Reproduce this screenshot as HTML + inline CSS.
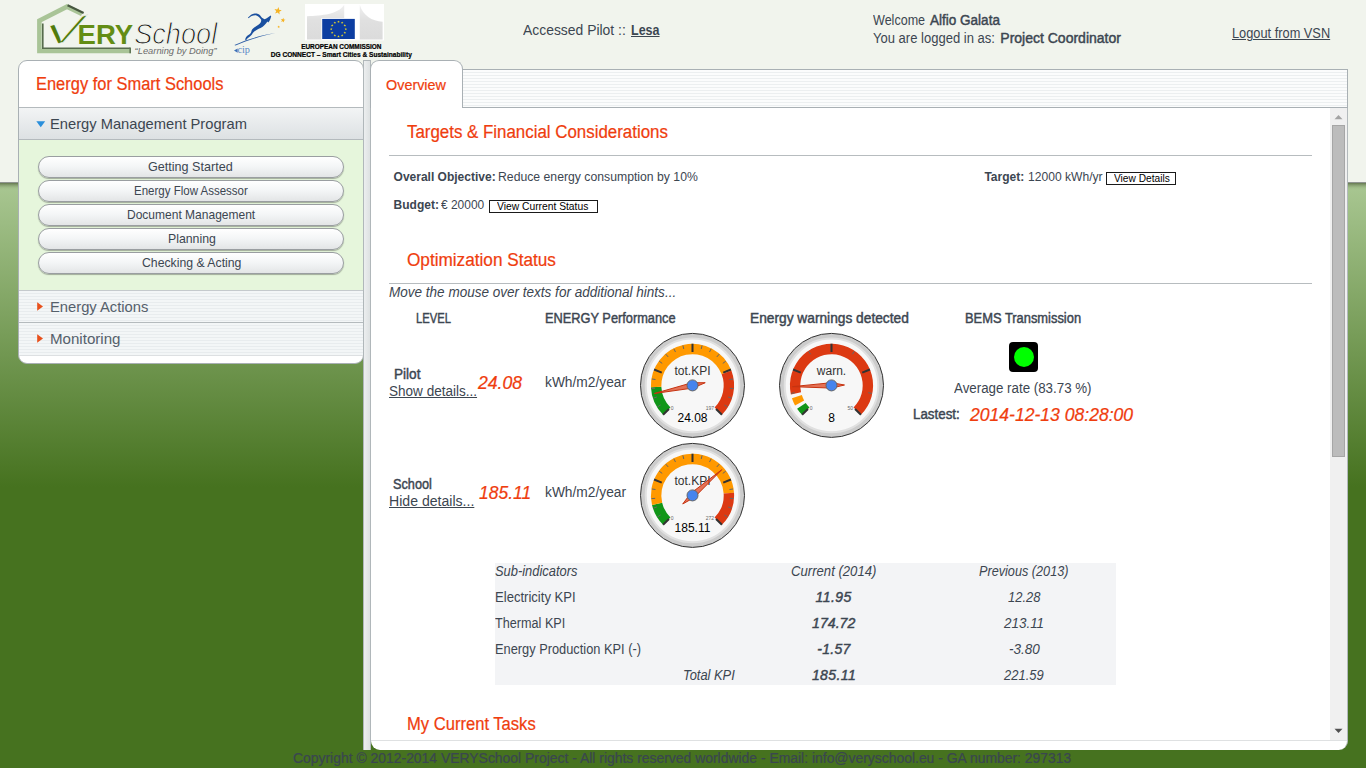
<!DOCTYPE html>
<html lang="en">
<head>
<meta charset="utf-8">
<title>VERYSchool Navigator - Energy for Smart Schools</title>
<style>
html,body{margin:0;padding:0;}
body{width:1366px;height:768px;overflow:hidden;position:relative;background:#46721f;
 font-family:"Liberation Sans","DejaVu Sans",sans-serif;font-size:13px;color:#3c4651;}
div,span,a,b,svg,button,h1,h2,h3,td,th{position:absolute;box-sizing:border-box;margin:0;padding:0;}
.t{white-space:nowrap;line-height:0;transform-origin:0 0;font-weight:normal;text-decoration:none;}
#bg{left:0;top:183px;width:1366px;height:304px;background:linear-gradient(to bottom,rgba(60,72,40,.62) 0,rgba(60,72,40,.46) 1px,rgba(60,72,40,.33) 2px,rgba(60,72,40,.21) 3px,rgba(60,72,40,.12) 4px,rgba(60,72,40,.05) 5px,rgba(60,72,40,0) 7px),linear-gradient(to bottom,#a9c792 0%,#46721f 100%);}
#top{left:0;top:0;width:1366px;height:183px;background:#f1f4ed;border-bottom:1px solid #8f9490;}
#left{left:18px;top:60px;width:346px;height:304px;border:1px solid #a9b0b4;border-radius:9px;background:#fff;overflow:hidden;}
.stripe{background:repeating-linear-gradient(to bottom,#f3f6f7 0,#f3f6f7 2px,#e8ecee 2px,#e8ecee 3px);}
#tabbar.stripe{background:repeating-linear-gradient(to bottom,#fbfcfc 0,#fbfcfc 2px,#eceff0 2px,#eceff0 3px);}
.row{left:0;width:344px;border-top:1px solid #b4babd;}
.btn{left:38px;width:306px;height:22px;border:1px solid #9a9ea1;border-radius:11px;
 background:linear-gradient(to bottom,#ffffff 0%,#f3f5f6 50%,#e3e5e6 100%);box-shadow:0 1px 1px rgba(0,0,0,.3);}
#split{left:363px;top:60px;width:8px;height:690px;background:linear-gradient(to right,#eceeef,#dde1e2);border:1px solid #b0b7ba;border-bottom:none;}
#tab{left:370px;top:60px;width:93px;height:48px;background:#fff;border:1px solid #a9b0b4;border-bottom:none;border-radius:9px 9px 0 0;}
#tabbar{left:462px;top:69px;width:886px;height:39px;border:1px solid #a9b0b4;border-left:none;}
#content{left:371px;top:108px;width:977px;height:642px;background:#fff;border-right:1px solid #b3b9bc;border-radius:0 0 9px 9px;}
.hr{left:389px;width:923px;height:1px;background:#b7bcbf;}
.sbtn{height:13px;background:#fff;border:1px solid #1a1a1a;}
#tbl{left:495px;top:563px;width:621px;height:122px;background:#f3f4f6;}
.gauge{overflow:visible;font-family:"Liberation Sans","DejaVu Sans",sans-serif;}
</style>
</head>
<body>
<div id="bg"></div>
<div id="top"></div>
<svg id="logo" style="left:0;top:0" width="430" height="62" viewBox="0 0 430 62" font-family="'Liberation Sans','DejaVu Sans',sans-serif">
<g fill="none" stroke-linejoin="miter">
<path d="M131,51 L39.4,51 L39.4,20.6 L67,6.6 L82,14" stroke="#a9c497" stroke-width="4.6"/>
<path d="M130,48.3 L42.8,48.3 L42.8,23.5" stroke="#566b4c" stroke-width="1.6"/>
<path d="M67.6,5.2 L83.6,13" stroke="#47573f" stroke-width="2.2"/>
<path d="M130.2,47.6 L130.2,53.2" stroke="#5f7554" stroke-width="1.6"/>
</g>
<text x="0" y="0" font-size="27" fill="#4f7a0c" stroke="#f1f4ed" stroke-width="0.65" transform="matrix(2.189,-0.639,-0.441,1.223,40.8,48.75)">V</text>
<text x="77.6" y="43.7" font-size="28" font-weight="bold" fill="#638d14" textLength="55.6" lengthAdjust="spacingAndGlyphs">ERY</text>
<text x="134.2" y="43.8" font-size="29.5" font-style="italic" fill="#111111" stroke="#f1f4ed" stroke-width="1.1" textLength="83" lengthAdjust="spacingAndGlyphs">School</text>
<text x="134.6" y="54.4" font-size="9" font-style="italic" fill="#6b6b6b" textLength="82" lengthAdjust="spacingAndGlyphs">“Learning by Doing”</text>
<g fill="#1a4f9f">
<path d="M248,17.6 C250,15.6 252,13.6 254.6,13.5 C257,13.4 259,13.9 260,15.2 C261.2,17 262.6,18.6 264.6,19.2 C267,18.4 268.8,16.8 270.6,15.4 L271.2,16.2 C270.6,18.6 269.8,21 268.2,22.4 L267.4,21.4 C266,23.6 263.6,26.6 260.6,28 C257.4,29.4 254.6,30.8 252.8,33 C251.6,35 250.6,36.4 248.6,37.4 C247.2,38.2 246.4,39.2 246.2,40.6 L245.2,40 C245.2,37.8 246.6,36 248.8,34.8 C250.6,33.8 251.4,32.6 251.6,30.6 C252.6,28.4 255.6,26.6 258.4,24.8 C260.4,23.4 261.4,21.6 261.2,19.8 C260,18 258.6,16.2 256.4,15.4 C253.4,15 250.6,16.4 248.6,18.2 Z"/>
<path d="M234.4,45 C246,39.6 260,35.4 275.4,33 C261,36 247.4,40.6 235.6,45.6 Z" opacity="0.9"/>
</g>
<path d="M278.58,7.06L279.08,9.76L281.76,10.36L279.35,11.67L279.61,14.41L277.62,12.51L275.09,13.61L276.28,11.13L274.46,9.07L277.18,9.43ZM283.43,17.74L283.76,19.47L285.48,19.85L283.93,20.69L284.10,22.45L282.82,21.23L281.20,21.94L281.96,20.35L280.79,19.03L282.54,19.26ZM278.94,25.52L279.12,26.49L280.09,26.71L279.22,27.18L279.31,28.16L278.60,27.48L277.69,27.87L278.12,26.98L277.46,26.24L278.44,26.37Z" fill="#f6b220"/>
<path d="M234,50.6L237.6,48.4L237.6,52.8Z" fill="#3f72b8"/>
<text x="237.4" y="53.4" font-size="10.5" font-family="'Liberation Serif','DejaVu Serif',serif" fill="#5a88c6" textLength="12.5" lengthAdjust="spacingAndGlyphs">cip</text>
<defs><linearGradient id="ecg" x1="0" y1="0" x2="0" y2="1"><stop offset="0" stop-color="#f0f0f0"/><stop offset="0.45" stop-color="#e0e0e0"/><stop offset="1" stop-color="#dbdbdb"/></linearGradient></defs>
<rect x="305" y="4" width="79" height="36.4" fill="#ffffff"/>
<path d="M307,39.6 L307,16.2 C322,15.6 338,14.6 344.2,4.8 L344.2,39.6 Z" fill="url(#ecg)"/>
<path d="M359.8,39.6 L359.8,4.8 C362.6,15 372,21.4 382.6,21.8 L382.6,39.6 Z" fill="url(#ecg)"/>
<rect x="321.4" y="18" width="34.2" height="21.8" fill="#ffffff"/>
<rect x="322.2" y="18.9" width="32.6" height="20.1" fill="#0c3da1"/>
<path d="M345.80,27.75L346.13,28.64L347.08,28.68L346.34,29.28L346.59,30.19L345.80,29.67L345.01,30.19L345.26,29.28L344.52,28.68L345.47,28.64ZM344.82,31.40L345.16,32.29L346.11,32.33L345.36,32.93L345.62,33.84L344.82,33.32L344.03,33.84L344.28,32.93L343.54,32.33L344.49,32.29ZM342.15,34.07L342.48,34.96L343.43,35.00L342.69,35.60L342.94,36.51L342.15,35.99L341.36,36.51L341.61,35.60L340.87,35.00L341.82,34.96ZM338.50,35.05L338.83,35.94L339.78,35.98L339.04,36.58L339.29,37.49L338.50,36.97L337.71,37.49L337.96,36.58L337.22,35.98L338.17,35.94ZM334.85,34.07L335.18,34.96L336.13,35.00L335.39,35.60L335.64,36.51L334.85,35.99L334.06,36.51L334.31,35.60L333.57,35.00L334.52,34.96ZM332.18,31.40L332.51,32.29L333.46,32.33L332.72,32.93L332.97,33.84L332.18,33.32L331.38,33.84L331.64,32.93L330.89,32.33L331.84,32.29ZM331.20,27.75L331.53,28.64L332.48,28.68L331.74,29.28L331.99,30.19L331.20,29.67L330.41,30.19L330.66,29.28L329.92,28.68L330.87,28.64ZM332.18,24.10L332.51,24.99L333.46,25.03L332.72,25.63L332.97,26.54L332.18,26.02L331.38,26.54L331.64,25.63L330.89,25.03L331.84,24.99ZM334.85,21.43L335.18,22.32L336.13,22.36L335.39,22.95L335.64,23.87L334.85,23.35L334.06,23.87L334.31,22.95L333.57,22.36L334.52,22.32ZM338.50,20.45L338.83,21.34L339.78,21.38L339.04,21.98L339.29,22.89L338.50,22.37L337.71,22.89L337.96,21.98L337.22,21.38L338.17,21.34ZM342.15,21.43L342.48,22.32L343.43,22.36L342.69,22.95L342.94,23.87L342.15,23.35L341.36,23.87L341.61,22.95L340.87,22.36L341.82,22.32ZM344.82,24.10L345.16,24.99L346.11,25.03L345.36,25.63L345.62,26.54L344.82,26.02L344.03,26.54L344.28,25.63L343.54,25.03L344.49,24.99Z" fill="#e6d62a"/>
<text x="301.2" y="49" font-size="6.4" font-weight="bold" fill="#000" stroke="#000" stroke-width="0.2" textLength="80.2" lengthAdjust="spacingAndGlyphs">EUROPEAN COMMISSION</text>
<text x="270.8" y="56.9" font-size="6.4" font-weight="bold" fill="#000" stroke="#000" stroke-width="0.2" textLength="141" lengthAdjust="spacingAndGlyphs">DG CONNECT – Smart Cities &amp; Sustainability</text>
</svg>
<div id="header">
<span class="t" style="left:523.1px;top:30px;font-size:15px;color:#3c4651;transform:scaleX(0.927)">Accessed Pilot ::</span>
<span class="t" style="left:631px;top:30px;font-size:15px;font-weight:bold;color:#3c4651;text-decoration:underline;transform:scaleX(0.834)">Lesa</span>
<span class="t" style="left:873.2px;top:20px;font-size:14px;color:#3c4651;transform:scaleX(0.897)">Welcome</span>
<span class="t" style="left:930.2px;top:20px;font-size:14px;-webkit-text-stroke:0.45px #3c4651;color:#3c4651;transform:scaleX(0.966)">Alfio Galata</span>
<span class="t" style="left:873.2px;top:38px;font-size:14px;color:#3c4651;transform:scaleX(0.93)">You are logged in as:</span>
<span class="t" style="left:1000.3px;top:38px;font-size:14px;-webkit-text-stroke:0.45px #3c4651;color:#3c4651">Project Coordinator</span>
<a class="t" style="left:1232.2px;top:33px;font-size:14px;color:#3c4651;text-decoration:underline;transform:scaleX(0.914)">Logout from VSN</a>
</div>
<div id="left">
<div class="row" style="top:46px;height:33px;border-bottom:1px solid #b4babd;background:linear-gradient(to bottom,#f2f4f5,#dde1e3);"></div>
<div style="left:0;top:79px;width:344px;height:150px;background:#e6f6dc;"></div>
<div class="row stripe" style="top:229px;height:33px;border-top-color:#c5cacd;"></div>
<div class="row stripe" style="top:261px;height:34px;border-bottom:1px solid #dde0e2;"></div>
</div>
<div id="nav">
<h1 class="t" style="left:35.686px;top:84px;font-size:18px;-webkit-text-stroke:0.22px #ef3d0e;color:#ef3d0e;transform:scaleX(0.914)">Energy for Smart Schools</h1>
<svg style="left:36px;top:121px" width="10" height="7" viewBox="0 0 10 7"><path d="M0.3,0.3L9.2,0.3L4.75,6.2Z" fill="#2a8fdb"/></svg>
<h2 class="t" style="left:49.6px;top:124px;font-size:15px;color:#3c4651;transform:scaleX(0.98)">Energy Management Program</h2>
<div class="btn" style="top:156px"></div><a class="t" style="left:148.1px;top:167px;font-size:13px;color:#3c4651;transform:scaleX(0.968)">Getting Started</a>
<div class="btn" style="top:180px"></div><a class="t" style="left:134.4px;top:191px;font-size:13px;color:#3c4651;transform:scaleX(0.885)">Energy Flow Assessor</a>
<div class="btn" style="top:204px"></div><a class="t" style="left:127.1px;top:215px;font-size:13px;color:#3c4651;transform:scaleX(0.924)">Document Management</a>
<div class="btn" style="top:228px"></div><a class="t" style="left:168.3px;top:239px;font-size:13px;color:#3c4651;transform:scaleX(0.946)">Planning</a>
<div class="btn" style="top:252px"></div><a class="t" style="left:142.1px;top:263px;font-size:13px;color:#3c4651;transform:scaleX(0.942)">Checking &amp; Acting</a>
<svg style="left:37px;top:302px" width="7" height="10" viewBox="0 0 7 10"><path d="M0.2,0.2L6,4.5L0.2,8.8Z" fill="#e8501c"/></svg>
<h2 class="t" style="left:49.6px;top:307px;font-size:15px;color:#55606b;transform:scaleX(0.983)">Energy Actions</h2>
<svg style="left:37px;top:334px" width="7" height="10" viewBox="0 0 7 10"><path d="M0.2,0.2L6,4.5L0.2,8.8Z" fill="#e8501c"/></svg>
<h2 class="t" style="left:49.6px;top:339px;font-size:15px;color:#55606b;transform:scaleX(1.006)">Monitoring</h2>
</div>
<div id="split"></div>
<div id="content"></div>
<div id="tabbar" class="stripe"></div>
<div id="tab"></div>
<a class="t" style="left:386.4px;top:85px;font-size:15px;-webkit-text-stroke:0.22px #ef3d0e;color:#ef3d0e;transform:scaleX(0.959)">Overview</a>
<div id="main">
<h2 class="t" style="left:407.3px;top:132px;font-size:18px;-webkit-text-stroke:0.22px #ef3d0e;color:#ef3d0e;transform:scaleX(0.938)">Targets &amp; Financial Considerations</h2>
<div class="hr" style="top:155px"></div>
<b class="t" style="left:393.6px;top:177px;font-size:12px;font-weight:bold;color:#3c4651">Overall Objective:</b><span class="t" style="left:498.1px;top:177px;font-size:12px;color:#3c4651;transform:scaleX(1.019)">Reduce energy consumption by 10%</span>
<b class="t" style="left:984.4px;top:177px;font-size:12px;font-weight:bold;color:#3c4651">Target:</b><span class="t" style="left:1028.092px;top:177px;font-size:12px;color:#3c4651;transform:scaleX(1.008)">12000 kWh/yr</span>
<div class="sbtn" style="left:1106px;top:172px;width:70px"></div><span class="t" style="left:1113.8px;top:178px;font-size:10.5px;color:#000;transform:scaleX(0.969)">View Details</span>
<b class="t" style="left:393.6px;top:205px;font-size:12px;font-weight:bold;color:#3c4651">Budget:</b><span class="t" style="left:441.4px;top:205px;font-size:12px;color:#3c4651;transform:scaleX(0.995)">€ 20000</span>
<div class="sbtn" style="left:489px;top:200px;width:109px"></div><span class="t" style="left:497.4px;top:206px;font-size:10.5px;color:#000;transform:scaleX(0.98)">View Current Status</span>
<h2 class="t" style="left:407.3px;top:260px;font-size:18px;-webkit-text-stroke:0.22px #ef3d0e;color:#ef3d0e;transform:scaleX(0.954)">Optimization Status</h2>
<div class="hr" style="top:283px"></div>
<span class="t" style="left:389.1px;top:292px;font-size:14px;font-style:italic;color:#3c4651;transform:scaleX(0.966)">Move the mouse over texts for additional hints...</span>
<span class="t" style="left:415.5px;top:318px;font-size:14px;-webkit-text-stroke:0.45px #3c4651;color:#3c4651;transform:scaleX(0.802)">LEVEL</span>
<span class="t" style="left:545.4px;top:318px;font-size:14px;-webkit-text-stroke:0.45px #3c4651;color:#3c4651;transform:scaleX(0.914)">ENERGY Performance</span>
<span class="t" style="left:749.5px;top:318px;font-size:14px;-webkit-text-stroke:0.45px #3c4651;color:#3c4651;transform:scaleX(0.981)">Energy warnings detected</span>
<span class="t" style="left:965.3px;top:318px;font-size:14px;-webkit-text-stroke:0.45px #3c4651;color:#3c4651;transform:scaleX(0.921)">BEMS Transmission</span>
<span class="t" style="left:393.7px;top:374px;font-size:14px;-webkit-text-stroke:0.45px #3c4651;color:#3c4651;transform:scaleX(0.971)">Pilot</span>
<a class="t" style="left:389.1px;top:391px;font-size:14px;color:#3c4651;text-decoration:underline;transform:scaleX(0.967)">Show details...</a>
<span class="t" style="left:477.9px;top:383px;font-size:18px;-webkit-text-stroke:0.22px #ef3d0e;font-style:italic;color:#ef3d0e;transform:scaleX(0.98)">24.08</span>
<span class="t" style="left:545.3px;top:382px;font-size:14px;color:#3c4651;transform:scaleX(0.983)">kWh/m2/year</span>
<svg class="gauge" style="left:634px;top:327px" width="116" height="116" viewBox="0 0 116 116" role="img" aria-label="tot.KPI 24.08">
<circle cx="58.5" cy="58.4" r="52" fill="#cccccc" stroke="#333333" stroke-width="1"/>
<circle cx="58.5" cy="58.4" r="46.8" fill="#f7f7f7" stroke="#e0e0e0" stroke-width="2"/>
<path d="M29.08,87.82A41.6,41.6 0 0 1 16.94,60.29L27.33,59.82A31.2,31.2 0 0 0 36.44,80.46Z" fill="#109618"/>
<path d="M16.94,60.29A41.6,41.6 0 0 1 97.37,43.57L87.65,47.28A31.2,31.2 0 0 0 27.33,59.82Z" fill="#ff9900"/>
<path d="M97.37,43.57A41.6,41.6 0 0 1 87.92,87.82L80.56,80.46A31.2,31.2 0 0 0 87.65,47.28Z" fill="#dc3912"/>
<text x="58.5" y="48" text-anchor="middle" font-size="12" fill="#333333">tot.KPI</text>
<text x="36.85" y="82.75" text-anchor="start" font-size="5" fill="#666666">0</text>
<text x="80.15" y="82.75" text-anchor="end" font-size="5" fill="#666666">197</text>
<path d="M29.08,87.82L34.97,81.93M20.07,42.48L27.75,45.66M58.5,16.8L58.5,25.12M96.93,42.48L89.25,45.66M87.92,87.82L82.03,81.93" stroke="#333333" stroke-width="2" fill="none"/>
<path d="M23.46,79.87L26.58,77.96M19.41,71.1L22.89,69.97M17.53,61.62L21.18,61.34M17.91,51.97L21.52,52.54M25.25,34.24L28.21,36.39M31.81,27.15L34.18,29.93M39.84,21.78L41.5,25.04M48.91,18.44L49.76,21.99M68.09,18.44L67.24,21.99M77.16,21.78L75.5,25.04M85.19,27.15L82.82,29.93M91.75,34.24L88.79,36.39M99.09,51.97L95.48,52.54M99.47,61.62L95.82,61.34M97.59,71.1L94.11,69.97M93.54,79.87L90.42,77.96" stroke="#666666" stroke-width="1" fill="none"/>
<text x="58.5" y="95.1" text-anchor="middle" font-size="12" fill="#000000">24.08</text>
<path d="M20.35,66.51L59.06,61.04L71.22,55.7L57.94,55.76Z" fill="#dc3912" fill-opacity="0.7" stroke="#c63310" stroke-width="1"/>
<circle cx="58.5" cy="58.4" r="5.5" fill="#4684ee" stroke="#666666" stroke-width="1"/>
</svg>
<svg class="gauge" style="left:773px;top:327px" width="116" height="116" viewBox="0 0 116 116" role="img" aria-label="warn. 8">
<circle cx="58.5" cy="58.4" r="52" fill="#cccccc" stroke="#333333" stroke-width="1"/>
<circle cx="58.5" cy="58.4" r="46.8" fill="#f7f7f7" stroke="#e0e0e0" stroke-width="2"/>
<path d="M29.08,87.82A41.6,41.6 0 0 1 24.09,81.78L32.7,75.94A31.2,31.2 0 0 0 36.44,80.46Z" fill="#109618"/>
<path d="M22.05,78.44A41.6,41.6 0 0 1 18.94,71.26L28.83,68.04A31.2,31.2 0 0 0 31.16,73.43Z" fill="#ff9900"/>
<path d="M17.9,67.47A41.6,41.6 0 1 1 87.92,87.82L80.56,80.46A31.2,31.2 0 1 0 28.05,65.21Z" fill="#dc3912"/>
<text x="58.5" y="48" text-anchor="middle" font-size="12" fill="#333333">warn.</text>
<text x="36.85" y="82.75" text-anchor="start" font-size="5" fill="#666666">0</text>
<text x="80.15" y="82.75" text-anchor="end" font-size="5" fill="#666666">50</text>
<path d="M29.08,87.82L34.97,81.93M20.07,42.48L27.75,45.66M58.5,16.8L58.5,25.12M96.93,42.48L89.25,45.66M87.92,87.82L82.03,81.93" stroke="#333333" stroke-width="2" fill="none"/>
<path d="M18.19,66.42L21.78,65.7M35.67,24.23L37.7,27.27M81.33,24.23L79.3,27.27M98.81,66.42L95.22,65.7" stroke="#666666" stroke-width="1" fill="none"/>
<text x="58.5" y="95.1" text-anchor="middle" font-size="12" fill="#000000">8</text>
<path d="M19.52,59.63L58.58,61.1L71.49,57.99L58.42,55.7Z" fill="#dc3912" fill-opacity="0.7" stroke="#c63310" stroke-width="1"/>
<circle cx="58.5" cy="58.4" r="5.5" fill="#4684ee" stroke="#666666" stroke-width="1"/>
</svg>
<div style="left:1009.3px;top:342.3px;width:28.8px;height:29.8px;background:#000;border-radius:4px;"></div>
<div style="left:1014px;top:347.2px;width:20px;height:20px;background:#00ff00;border-radius:50%;"></div>
<span class="t" style="left:954.2px;top:388px;font-size:14px;color:#3c4651;transform:scaleX(0.952)">Average rate (83.73 %)</span>
<span class="t" style="left:913.3px;top:414px;font-size:14px;-webkit-text-stroke:0.45px #3c4651;color:#3c4651;transform:scaleX(0.953)">Lastest:</span>
<span class="t" style="left:969.5px;top:415px;font-size:18px;-webkit-text-stroke:0.22px #ef3d0e;font-style:italic;color:#ef3d0e;transform:scaleX(0.976)">2014-12-13 08:28:00</span>
<span class="t" style="left:393.3px;top:484px;font-size:14px;-webkit-text-stroke:0.45px #3c4651;color:#3c4651;transform:scaleX(0.907)">School</span>
<a class="t" style="left:389.1px;top:501px;font-size:14px;color:#3c4651;text-decoration:underline;transform:scaleX(1.006)">Hide details...</a>
<span class="t" style="left:479px;top:493px;font-size:18px;-webkit-text-stroke:0.22px #ef3d0e;font-style:italic;color:#ef3d0e;transform:scaleX(0.97)">185.11</span>
<span class="t" style="left:545.3px;top:492px;font-size:14px;color:#3c4651;transform:scaleX(0.983)">kWh/m2/year</span>
<svg class="gauge" style="left:634px;top:437px" width="116" height="116" viewBox="0 0 116 116" role="img" aria-label="tot.KPI 185.11">
<circle cx="58.5" cy="58.4" r="52" fill="#cccccc" stroke="#333333" stroke-width="1"/>
<circle cx="58.5" cy="58.4" r="46.8" fill="#f7f7f7" stroke="#e0e0e0" stroke-width="2"/>
<path d="M29.08,87.82A41.6,41.6 0 0 1 18.03,68.05L28.15,65.64A31.2,31.2 0 0 0 36.44,80.46Z" fill="#109618"/>
<path d="M18.03,68.05A41.6,41.6 0 1 1 100.02,55.79L89.64,56.44A31.2,31.2 0 1 0 28.15,65.64Z" fill="#ff9900"/>
<path d="M100.02,55.79A41.6,41.6 0 0 1 87.92,87.82L80.56,80.46A31.2,31.2 0 0 0 89.64,56.44Z" fill="#dc3912"/>
<text x="58.5" y="48" text-anchor="middle" font-size="12" fill="#333333">tot.KPI</text>
<text x="36.85" y="82.75" text-anchor="start" font-size="5" fill="#666666">0</text>
<text x="80.15" y="82.75" text-anchor="end" font-size="5" fill="#666666">272</text>
<path d="M29.08,87.82L34.97,81.93M20.07,42.48L27.75,45.66M58.5,16.8L58.5,25.12M96.93,42.48L89.25,45.66M87.92,87.82L82.03,81.93" stroke="#333333" stroke-width="2" fill="none"/>
<path d="M23.46,79.87L26.58,77.96M19.41,71.1L22.89,69.97M17.53,61.62L21.18,61.34M17.91,51.97L21.52,52.54M25.25,34.24L28.21,36.39M31.81,27.15L34.18,29.93M39.84,21.78L41.5,25.04M48.91,18.44L49.76,21.99M68.09,18.44L67.24,21.99M77.16,21.78L75.5,25.04M85.19,27.15L82.82,29.93M91.75,34.24L88.79,36.39M99.09,51.97L95.48,52.54M99.47,61.62L95.82,61.34M97.59,71.1L94.11,69.97M93.54,79.87L90.42,77.96" stroke="#666666" stroke-width="1" fill="none"/>
<text x="58.5" y="95.1" text-anchor="middle" font-size="12" fill="#000000">185.11</text>
<path d="M87.82,32.68L56.72,56.37L48.73,66.97L60.28,60.43Z" fill="#dc3912" fill-opacity="0.7" stroke="#c63310" stroke-width="1"/>
<circle cx="58.5" cy="58.4" r="5.5" fill="#4684ee" stroke="#666666" stroke-width="1"/>
</svg>
<div id="tbl"></div>
<span class="t" style="left:495px;top:571px;font-size:14px;font-style:italic;color:#3c4651;transform:scaleX(0.921)">Sub-indicators</span>
<span class="t" style="left:791.2px;top:571px;font-size:14px;font-style:italic;color:#3c4651;transform:scaleX(0.938)">Current (2014)</span>
<span class="t" style="left:979.1px;top:571px;font-size:14px;font-style:italic;color:#3c4651;transform:scaleX(0.905)">Previous (2013)</span>
<span class="t" style="left:495px;top:597px;font-size:14px;color:#3c4651;transform:scaleX(0.934)">Electricity KPI</span>
<span class="t" style="left:815.6px;top:597px;font-size:14px;-webkit-text-stroke:0.45px #3c4651;font-style:italic;color:#3c4651;letter-spacing:0.4px">11.95</span>
<span class="t" style="left:1007.7px;top:597px;font-size:14px;font-style:italic;color:#3c4651;transform:scaleX(0.926)">12.28</span>
<span class="t" style="left:495px;top:623px;font-size:14px;color:#3c4651;transform:scaleX(0.903)">Thermal KPI</span>
<span class="t" style="left:811.9px;top:623px;font-size:14px;-webkit-text-stroke:0.45px #3c4651;font-style:italic;color:#3c4651;transform:scaleX(1.012)">174.72</span>
<span class="t" style="left:1004px;top:623px;font-size:14px;font-style:italic;color:#3c4651;transform:scaleX(0.959)">213.11</span>
<span class="t" style="left:495px;top:649px;font-size:14px;color:#3c4651;transform:scaleX(0.915)">Energy Production KPI (-)</span>
<span class="t" style="left:817.3px;top:649px;font-size:14px;-webkit-text-stroke:0.45px #3c4651;font-style:italic;color:#3c4651;letter-spacing:0.275px">-1.57</span>
<span class="t" style="left:1008.5px;top:649px;font-size:14px;font-style:italic;color:#3c4651;transform:scaleX(0.966)">-3.80</span>
<span class="t" style="left:683.18px;top:675px;font-size:14px;font-style:italic;color:#3c4651;transform:scaleX(0.92)">Total KPI</span>
<span class="t" style="left:811.9px;top:675px;font-size:14px;-webkit-text-stroke:0.45px #3c4651;font-style:italic;color:#3c4651;letter-spacing:0.42px">185.11</span>
<span class="t" style="left:1004px;top:675px;font-size:14px;font-style:italic;color:#3c4651;transform:scaleX(0.926)">221.59</span>
<h2 class="t" style="left:406.879px;top:724px;font-size:18px;-webkit-text-stroke:0.22px #ef3d0e;color:#ef3d0e;transform:scaleX(0.921)">My Current Tasks</h2>
</div>
<div id="scroll" style="left:1330px;top:108px;width:17px;height:633px;background:#f0f0f0;"><svg style="left:4px;top:6px" width="9" height="6" viewBox="0 0 9 6"><path d="M0.5,5.2L4.5,1L8.5,5.2Z" fill="#a3a3a3"/></svg><div style="left:2px;top:17px;width:13px;height:332px;background:#bcbcbc;border:1px solid #a6a6a6;"></div><svg style="left:4px;top:620px" width="9" height="6" viewBox="0 0 9 6"><path d="M0.5,0.8L8.5,0.8L4.5,5Z" fill="#505050"/></svg></div>
<div style="left:371px;top:740px;width:976px;height:1px;background:#dfe1e2;"></div>
<div class="t" style="left:293.2px;top:758px;font-size:14px;-webkit-text-stroke:0.22px #3a4650;color:#3a4650;transform:scaleX(0.994)">Copyright © 2012-2014 VERYSchool Project - All rights reserved worldwide - Email: info@veryschool.eu - GA number: 297313</div>
</body>
</html>
